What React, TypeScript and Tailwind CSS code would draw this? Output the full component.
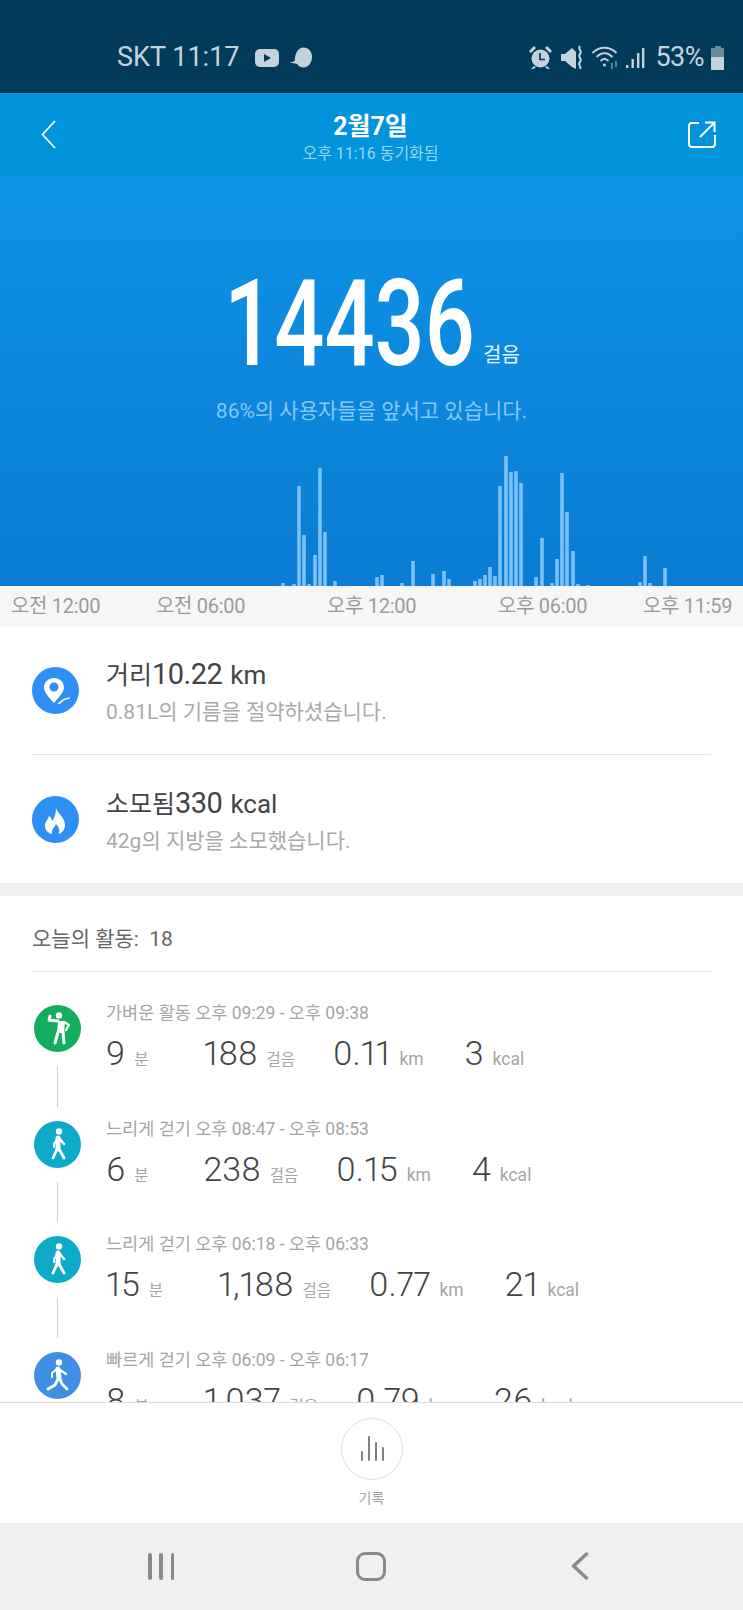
const sans = "font-['Roboto','Noto_Sans_CJK_KR',sans-serif]"

// x centre and height in px, read off the reference
const bars: [number, number][] = [
  [283, 3], [294, 2], [299, 100], [304, 51], [309, 2], [315, 31], [320, 118], [325, 54], [335, 5],
  [377, 9], [382, 11], [402, 3], [413, 25], [433, 12], [444, 15], [449, 7], [475, 5], [480, 7],
  [485, 11], [490, 19], [495, 10], [500, 100], [506, 130], [511, 114], [516, 115], [521, 103],
  [536, 9], [542, 48], [552, 3], [557, 27], [562, 113], [567, 74], [573, 35], [578, 2], [588, 1],
  [640, 4], [645, 30], [650, 3], [665, 18],
]

const axisLabels = [
  { text: "오전 12:00", gap: "ml-[11px]" },
  { text: "오전 06:00", gap: "ml-[56px]" },
  { text: "오후 12:00", gap: "ml-[82px]" },
  { text: "오후 06:00", gap: "ml-[82px]" },
  { text: "오후 11:59", gap: "ml-[56px]" },
]

function StatusIcons() {
  return (
    <div className="flex items-center text-[#c6d2da]">
      {/* alarm */}
      <svg width="23" height="25" viewBox="0 0 23 25" className="mr-[8px]" fill="currentColor">
        <circle cx="11.500" cy="13.500" r="9" />
        <path d="M0 6l5-5 2 2-5 5zM23 6l-5-5-2 2 5 5zM5 21l-3 3h2.500l2.500-2zM18 21l3 3h-2.500L16 22z" />
        <path d="M11 8v6.500h5" fill="none" stroke="#023a5a" strokeWidth="1.700" />
      </svg>
      {/* vibrate off */}
      <svg width="24" height="25" viewBox="0 0 24 25" className="mr-[8px]" fill="currentColor">
        <path d="M1 9h4l7-6 4 4v17l-4-2-7-6H1z" />
        <path d="M20 1c-3 3 3 5 0 8s3 5 0 8 2 4 0 7" fill="none" stroke="currentColor" strokeWidth="2" />
      </svg>
      {/* wifi */}
      <svg width="27" height="26" viewBox="0 0 27 26" className="mr-[7px]" fill="none" stroke="currentColor" strokeWidth="1.800">
        <path d="M0.500 8c7-7 17-7 24 0" />
        <path d="M4.500 12c5-5 11-5 16 0" />
        <path d="M8.500 16c3-3 5-3 8 0" />
        <circle cx="12.500" cy="20" r="1.500" fill="currentColor" stroke="none" />
        <path d="M20 24v-6M24 22v-6" stroke="#7f98a8" strokeWidth="1.500" />
      </svg>
      {/* signal */}
      <svg width="19" height="22" viewBox="0 0 19 22" className="mr-[10px]" fill="currentColor">
        <rect x="0" y="18" width="2.400" height="3" />
        <rect x="5.500" y="12" width="2.400" height="9" />
        <rect x="11" y="6" width="2.400" height="15" />
        <rect x="16" y="1" width="2.400" height="20" />
      </svg>
      <span className="text-[27px] leading-none tracking-[-0.5px]">53%</span>
      {/* battery */}
      <div className="ml-[7px] flex h-[24px] w-[13px] flex-col items-center">
        <div className="h-[2px] w-[6px] bg-[#6d8a9c]" />
        <div className="h-[9px] w-full bg-[#6d8a9c]" />
        <div className="h-[13px] w-full bg-[#c6d2da]" />
      </div>
    </div>
  )
}

function StatusBar() {
  return (
    <div className="flex h-[93px] shrink-0 items-center justify-between bg-[#023a5a] pt-[22px] pl-[117px] pr-[19px]">
      <div className="flex items-center text-[#c6d2da]">
        <span className="text-[27px] leading-none">SKT 11:17</span>
        <svg width="24" height="18" viewBox="0 0 24 18" className="ml-[15px]">
          <rect width="24" height="18" rx="5" fill="currentColor" />
          <path d="M9 5l7 4-7 4z" fill="#023a5a" />
        </svg>
        <svg width="24" height="22" viewBox="0 0 25 22" className="ml-[10px]" fill="currentColor">
          <path d="M15 0c6 0 9 5 9 10 0 6-4 11-9 11-3 0-5-2-7-4l-7-1 5-2C6 7 9 0 15 0z" />
        </svg>
      </div>
      <StatusIcons />
    </div>
  )
}

function Header() {
  return (
    <div className="flex h-[83px] shrink-0 items-center justify-between bg-[#0393dc] pl-[41px] pr-[26px]">
      <svg width="15" height="29" viewBox="0 0 15 29" fill="none" stroke="white" strokeWidth="1.700">
        <path d="M14 1L1.500 14.500 14 28" />
      </svg>
      <div className="mt-[6px] flex flex-col items-center pr-[3px]">
        <div className="text-[25px] font-bold leading-[30px] text-white">2월7일</div>
        <div className="mt-[2px] text-[16px] leading-[20px] text-[#9ad6f6]">오후 11:16 동기화됨</div>
      </div>
      <svg width="29" height="27" viewBox="0 0 29 27" fill="none" stroke="white" strokeWidth="2">
        <path d="M11 2H4a3 3 0 0 0-3 3v18a3 3 0 0 0 3 3h20a3 3 0 0 0 3-3v-9" />
        <path d="M12 16L26 2M17 1.500h9.500V11" />
      </svg>
    </div>
  )
}

function Hero() {
  return (
    <div className="flex h-[410px] shrink-0 flex-col bg-gradient-to-b from-[#0e93e7] to-[#0a7cd3]">
      <div className="mt-[103px] flex items-end pl-[225px]">
        <div className="flex h-[90px] w-[248px] items-center justify-center">
          <span className="inline-block scale-x-[0.735] text-[120px] font-medium leading-none whitespace-nowrap text-white">
            14436
          </span>
        </div>
        <span className="mb-[2px] ml-[10px] text-[20px] leading-[24px] text-[#e6f4fd]">걸음</span>
      </div>
      <div className="mt-[29px] text-center text-[21px] leading-[26px] text-[#86c9f8]">
        86%의 사용자들을 앞서고 있습니다.
      </div>
      <svg width="743" height="140" viewBox="0 0 743 140" className="mt-auto block">
        {bars.map(([x, h]) => (
          <rect key={x} x={x - 1.8} y={140 - h} width="3.600" height={h} fill="#7cc1f6" />
        ))}
      </svg>
    </div>
  )
}

function Axis() {
  return (
    <div className="flex h-[40px] shrink-0 items-center bg-[#f5f6f8] text-[20px] leading-none tracking-[-0.3px] text-[#9b9b9b]">
      {axisLabels.map((l) => (
        <span key={l.text} className={`${l.gap} w-[89px] whitespace-nowrap`}>
          {l.text}
        </span>
      ))}
    </div>
  )
}

function PinIcon() {
  return (
    <svg width="47" height="47" viewBox="0 0 47 47" className="shrink-0">
      <circle cx="23.500" cy="23.500" r="23.500" fill="#2e8ff5" />
      <path d="M22 11c-6 0-10 4.500-10 9.500 0 5 6 11 10 15.500 3-4 10-10.500 10-15.500 0-5-4-9.500-10-9.500z" fill="white" />
      <circle cx="22" cy="20" r="4.500" fill="#2e8ff5" />
      <path d="M26 36.500c3.500 0 4-4.500 7.500-4.500 2 0 3-.5 4-1.500" fill="none" stroke="white" strokeWidth="1.500" />
    </svg>
  )
}

function FlameIcon() {
  return (
    <svg width="47" height="47" viewBox="0 0 47 47" className="shrink-0">
      <circle cx="23.500" cy="23.500" r="23.500" fill="#2e8ff5" />
      <path
        d="M24 12c1 5 9 9 9 17 0 5-3 8-7 9 2-2 2-6-2-10-1 3-5 5-4 10-4-1-7-4-7-8 0-5 3-6 4-10 2 1 3 3 3 5 3-3 4-8 4-13z"
        fill="white"
      />
    </svg>
  )
}

function SummaryRow({ icon, label, value, unit, note }: { icon: React.ReactNode; label: string; value: string; unit: string; note: string }) {
  return (
    <div className="flex h-[128px] items-center">
      {icon}
      <div className="ml-[27px]">
        <div className="flex items-baseline text-[25px] leading-[34px] text-[#444]">
          <span>{label}</span>
          <span className="text-[29px] tracking-[-0.5px]">{value}</span>
          <span className="ml-[8px] text-[26px]">{unit}</span>
        </div>
        <div className="mt-[7px] text-[21px] leading-[24px] text-[#a9a9a9]">{note}</div>
      </div>
    </div>
  )
}

function BodyIcon({ kind, fill }: { kind: "light" | "slow" | "fast"; fill: string }) {
  return (
    <svg width="47" height="47" viewBox="0 0 47 47" className="block">
      <circle cx="23.500" cy="23.500" r="23.500" fill={fill} />
      {kind === "light" && (
        <g fill="none" stroke="white" strokeLinecap="round" strokeLinejoin="round">
          <circle cx="25" cy="10.500" r="3.200" fill="white" stroke="none" />
          <path d="M25 17l-1 10h5l1-10z" fill="white" strokeWidth="2" />
          <path d="M24 16l-9-1 1-4" strokeWidth="2.800" />
          <path d="M30 17l5 3-3 5" strokeWidth="2.400" />
          <path d="M24 27l-3 11M29 27l1 11" strokeWidth="3" />
        </g>
      )}
      {kind === "slow" && (
        <g fill="none" stroke="white" strokeLinecap="round" strokeLinejoin="round">
          <circle cx="25" cy="10.500" r="3.200" fill="white" stroke="none" />
          <path d="M24 17v11" strokeWidth="5" />
          <path d="M24 17l-4 6v3" strokeWidth="2" />
          <path d="M26 18l4 5" strokeWidth="2.400" />
          <path d="M23 28l-4 9M25 28l5 9" strokeWidth="2.800" />
        </g>
      )}
      {kind === "fast" && (
        <g fill="none" stroke="white" strokeLinecap="round" strokeLinejoin="round">
          <circle cx="25" cy="10.500" r="3.200" fill="white" stroke="none" />
          <path d="M24 17l1 9" strokeWidth="5" />
          <path d="M23 17l-5 4 0 4" strokeWidth="2" />
          <path d="M26 18l6 4" strokeWidth="2.400" />
          <path d="M24 27l-3 6-7 4M26 27l2 5 5 5" strokeWidth="2.800" />
        </g>
      )}
    </svg>
  )
}

const activities = [
  { kind: "light" as const, fill: "#12ae5e", title: "가벼운 활동 오후 09:29 - 오후 09:38", min: "9", steps: "188", km: "0.11", kcal: "3" },
  { kind: "slow" as const, fill: "#0fa9c9", title: "느리게 걷기 오후 08:47 - 오후 08:53", min: "6", steps: "238", km: "0.15", kcal: "4" },
  { kind: "slow" as const, fill: "#0fa9c9", title: "느리게 걷기 오후 06:18 - 오후 06:33", min: "15", steps: "1,188", km: "0.77", kcal: "21" },
  { kind: "fast" as const, fill: "#3f8fe2", title: "빠르게 걷기 오후 06:09 - 오후 06:17", min: "8", steps: "1,037", km: "0.79", kcal: "26" },
]

function Stat({ value, unit, gap, unitSize }: { value: string; unit: string; gap: string; unitSize: string }) {
  return (
    <div className={`flex items-baseline ${gap}`}>
      <span className="text-[34px] font-light leading-[40px] text-[#444] proportional-nums">{value}</span>
      <span className={`ml-[9px] text-[#a5a5a5] ${unitSize}`}>{unit}</span>
    </div>
  )
}

function ActivityRow({ a }: { a: (typeof activities)[number] }) {
  return (
    <div className="flex h-[115.500px] shrink-0">
      <div className="flex w-[47px] shrink-0 flex-col items-center">
        <BodyIcon kind={a.kind} fill={a.fill} />
        <div className="mt-[14px] h-[41px] w-px bg-[#cfcfcf]" />
      </div>
      <div className="ml-[25px] -mt-[4px]">
        <div className="text-[17.500px] leading-[24px] whitespace-nowrap text-[#a5a5a5]">{a.title}</div>
        <div className="mt-[8px] flex items-baseline">
          <Stat value={a.min} unit="분" gap="mr-[55px]" unitSize="text-[15.500px]" />
          <Stat value={a.steps} unit="걸음" gap="mr-[38px]" unitSize="text-[15.500px]" />
          <Stat value={a.km} unit="km" gap="mr-[41px]" unitSize="text-[17.500px]" />
          <Stat value={a.kcal} unit="kcal" gap="" unitSize="text-[17.500px]" />
        </div>
      </div>
    </div>
  )
}

function TabBar() {
  return (
    <div className="flex h-[121px] shrink-0 flex-col items-center border-t border-[#dcdcdc] bg-white pt-[15px]">
      <div className="flex h-[62px] w-[62px] items-center justify-center rounded-full border border-[#e0e0e0]">
        <svg width="26" height="26" viewBox="0 0 26 26" stroke="#808080" strokeWidth="2" strokeLinecap="round">
          <path d="M3 25v-8M10 25V2M17 25V8M24 25V13" transform="translate(0 -1)" />
        </svg>
      </div>
      <div className="mt-[8px] text-[14px] leading-[20px] text-[#a5a5a5]">기록</div>
    </div>
  )
}

function NavBar() {
  return (
    <div className="flex h-[87px] shrink-0 items-center bg-[#f0f0f0] pb-[1px] pl-[148px]">
      <div className="flex h-[27px] w-[26px] justify-between">
        <div className="h-full w-[3.500px] rounded-full bg-[#8a8a8a]" />
        <div className="h-full w-[3.500px] rounded-full bg-[#8a8a8a]" />
        <div className="h-full w-[3.500px] rounded-full bg-[#8a8a8a]" />
      </div>
      <div className="ml-[182px] h-[29px] w-[30px] rounded-[9px] border-[3.500px] border-[#8a8a8a]" />
      <svg width="18" height="28" viewBox="0 0 18 28" className="ml-[185px]" fill="none" stroke="#8a8a8a" strokeWidth="3.500" strokeLinecap="round" strokeLinejoin="round">
        <path d="M15.500 2L2.500 14l13 12" />
      </svg>
    </div>
  )
}

export default function App() {
  return (
    <div className={`flex h-[1610px] w-[743px] flex-col overflow-hidden bg-white ${sans}`}>
      <StatusBar />
      <Header />
      <Hero />
      <Axis />

      <div className="shrink-0 bg-white px-[32px]">
        <SummaryRow icon={<PinIcon />} label="거리" value="10.22" unit="km" note="0.81L의 기름을 절약하셨습니다." />
        <div className="h-px bg-[#e6e6e6]" />
        <SummaryRow icon={<FlameIcon />} label="소모됨" value="330" unit="kcal" note="42g의 지방을 소모했습니다." />
      </div>
      <div className="h-[13px] shrink-0 bg-[#eef0f2]" />

      <div className="min-h-0 flex-1 overflow-hidden">
        <div className="mx-[32px] flex h-[76px] items-center border-b border-[#e6e6e6] pt-[12px] text-[21px] text-[#666]">
          오늘의 활동:&nbsp; 18
        </div>
        <div className="mt-[33px] flex flex-col pl-[34px]">
          {activities.map((a) => (
            <ActivityRow key={a.title} a={a} />
          ))}
        </div>
      </div>

      <TabBar />
      <NavBar />
    </div>
  )
}
